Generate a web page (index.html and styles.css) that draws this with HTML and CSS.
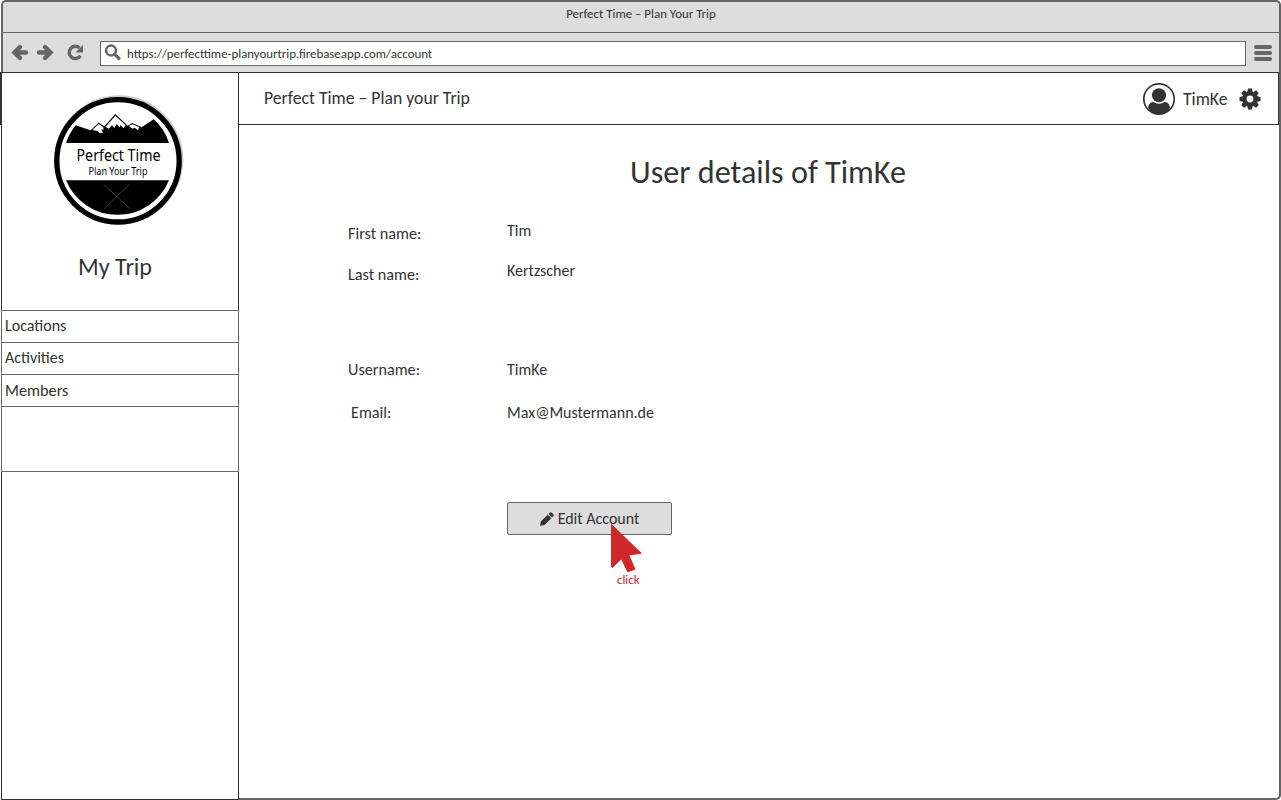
FILE: index.html
```html
<!DOCTYPE html>
<html lang="en">
<head>
<meta charset="utf-8">
<title>Perfect Time – Plan Your Trip</title>
<link rel="stylesheet" href="styles.css">
</head>
<body>
<div class="window">
  <div class="chrome">
    <div class="titlebar"><span class="window-title">Perfect Time – Plan Your Trip</span></div>
    <div class="toolbar">
      <svg class="nav" width="86" height="38" viewBox="3 33 86 38">
        <g fill="none" stroke="#666" stroke-width="4.400">
          <path d="M26 52.500H15M20 47L14.500 52.500L20 58" stroke-linecap="round"/>
          <path d="M39 52.500H50M45 47L50.500 52.500L45 58" stroke-linecap="round"/>
          <path d="M79.500 48A6.100 6.100 0 1 0 80.400 55.800" stroke-width="3.500"/>
        </g>
        <path d="M83 45V52.500H75.500Z" fill="#666"/>
      </svg>
      <div class="address">
        <svg class="search" width="18" height="18" viewBox="0 0 18 18"><circle cx="7" cy="6.500" r="4.900" fill="none" stroke="#666" stroke-width="2.500"/><path d="M10.600 10.200L15 14.500" stroke="#666" stroke-width="3.200" stroke-linecap="round"/></svg>
        <span class="url">https://perfecttime-planyourtrip.firebaseapp.com/account</span>
      </div>
      <div class="menu"><i></i><i></i><i></i></div>
    </div>
  </div>
  <div class="page">
    <aside class="sidebar">
      <div class="brand">
        <svg class="logo" width="140" height="140" viewBox="48 90 140 140">
          <circle cx="118.800" cy="159.800" r="64.500" fill="#ccc"/>
          <circle cx="118" cy="160.800" r="61.200" fill="#fff" stroke="#000" stroke-width="5.300"/>
          <g transform="translate(40 85) scale(.33333)">
            <path d="M78 174Q88 145 107 121L152 136L176 113L193 124L226 87L263 122L277 114L305 127L341 103Q374 132 387 174Z"/>
            <path d="M157 135L176 117L190 127L191 134L184 133L189 143L178 144L173 138ZM197 125L226 92L257 121L250 130L242 120L239 127L230 117L223 129L216 121L206 131ZM266 123L278 118L298 127L294 136L284 128L278 131Z" fill="#fff"/>
            <path d="M78 286H387A167 167 0 0 1 78 286Z"/>
            <path d="M190 297L271 372M269 297L192 372" stroke="#777" stroke-width="1.500"/>
          </g>
          <text class="logo-name" x="76.500" y="160.500" textLength="84" lengthAdjust="spacingAndGlyphs">Perfect Time</text>
          <text class="logo-tag" x="88.500" y="175.300" textLength="59" lengthAdjust="spacingAndGlyphs">Plan Your Trip</text>
        </svg>
        <span class="trip">My Trip</span>
      </div>
      <nav class="links">
        <a class="link locations">Locations</a>
        <a class="link activities">Activities</a>
        <a class="link members">Members</a>
        <div class="link-space"></div>
      </nav>
    </aside>
    <main class="main">
      <header class="header">
        <span class="app-name">Perfect Time – Plan your Trip</span>
        <div class="user">
          <svg width="34" height="34" viewBox="0 0 34 34"><circle cx="17" cy="17" r="15.200" fill="#fff" stroke="#333" stroke-width="1.700"/><circle cx="17" cy="13.300" r="7" fill="#333"/><path d="M6 26Q6.500 21 10.500 20Q12 19.700 13 20.700Q17 23 21 20.700Q22 19.700 23.500 20Q27.500 21 28 26Q24 32.500 17 32.500T6 26Z" fill="#333"/></svg>
          <span class="user-name">TimKe</span>
          <svg class="gear" width="22" height="22" viewBox="-11 -11 22 22"><g fill="#333"><circle r="7.800"/><path id="tooth" d="M-2.700 -7L-1.900 -10.500H1.900L2.700 -7V7L1.900 10.500H-1.900L-2.700 7Z"/><use href="#tooth" transform="rotate(45)"/><use href="#tooth" transform="rotate(90)"/><use href="#tooth" transform="rotate(135)"/></g><circle r="3.400" fill="#fff"/></svg>
        </div>
      </header>
      <section class="content">
        <h1 class="heading">User details of TimKe</h1>
        <dl class="details">
          <dt class="label first-l">First name:</dt><dd class="value first-v">Tim</dd>
          <dt class="label last-l">Last name:</dt><dd class="value last-v">Kertzscher</dd>
          <dt class="label username-l">Username:</dt><dd class="value username-v">TimKe</dd>
          <dt class="label email-l">Email:</dt><dd class="value email-v">Max@Mustermann.de</dd>
        </dl>
        <div class="action">
          <button class="edit">
            <svg width="14" height="14" viewBox="0 0 14 14" fill="#333"><path d="M0 13.800L.9 9.300L7.800 2.700L11.300 6.200L4.500 12.900ZM8.500 2L10 .5Q10.800 0 11.500 .5L13.500 2.500Q14.200 3.300 13.500 4L12 5.500Z"/></svg>
            <span class="edit-text">Edit Account</span>
          </button>
          <div class="click-note">
            <svg width="32" height="50" viewBox="0 0 32 50"><path d="M1.500 1.500L31.200 30.300L18.800 32L25 46.300L17.700 48.700L11.300 35.700L2.500 44.300L1.500 44Z" fill="#d02828" stroke="#d02828" stroke-linejoin="round"/></svg>
            <span class="click-text">click</span>
          </div>
        </div>
      </section>
    </main>
  </div>
</div>
</body>
</html>
```
FILE: styles.css
```css
* { box-sizing: border-box; }
body { margin: 0; background: #fff; color: #333; font-family: Carlito, Lato, sans-serif; font-size: 16px; }
svg { display: block; flex: none; }
span, a, dt, dd { white-space: nowrap; }
.window { width: 1280px; height: 800px; margin-left: 1px; display: flex; flex-direction: column; }
.chrome { height: 72px; flex: none; background: #ddd; border: 2px solid #666; border-bottom: 0; border-radius: 5px 5px 0 0; }
.titlebar { height: 31px; border-bottom: 1px solid #666; text-align: center; line-height: 23px; font-size: 12.900px; }
.toolbar { height: 39px; display: flex; align-items: flex-start; }
.address { width: 1146px; height: 25px; margin: 8px 8px 0 11px; border: 1px solid #666; background: #fff; display: flex; align-items: center; font-size: 12.850px; }
.search { margin: 0 5px 1px 3px; }
.menu { display: flex; flex-direction: column; gap: 2px; padding-top: 12px; }
.menu i { width: 18px; height: 4px; border-radius: 2px; background: #666; }
.page { flex: 1; display: flex; position: relative; }
/* outer edge of the header band, left of the sidebar */
.page::before { content: ""; position: absolute; left: -1px; top: 0; width: 1px; height: 53px; background: #333; }
.sidebar { width: 238px; border: 1px solid #333; }
.brand { height: 237px; display: flex; flex-direction: column; padding-top: 17px; }
.logo { margin-left: 46px; }
.logo-name { font: 17px "Noto Sans", sans-serif; }
.logo-tag { font: 11.500px "Noto Sans", sans-serif; }
.trip { font-size: 24.200px; line-height: 28px; margin: 23px 0 0 76px; }
.links { margin: 0 -1px; border: 1px solid #666; height: 162px; }
.link { display: block; height: 32px; border-bottom: 1px solid #666; padding-left: 3px; line-height: 30px; }
.members { font-size: 16.300px; }
.main { flex: 1; display: flex; flex-direction: column; border-right: 2px solid #666; border-bottom: 2px solid #666; border-radius: 0 0 5px 0; }
.header { height: 53px; flex: none; border: 1px solid #333; border-left: 0; display: flex; justify-content: space-between; padding-left: 25px; }
.app-name { font-size: 17.700px; line-height: 50px; }
.user { display: flex; align-items: center; padding-right: 17px; }
.user-name { width: 46px; margin: 0 10px 0 7px; font-size: 17.700px; line-height: 24px; }
.content { display: flex; flex-direction: column; }
.heading { font-size: 32.200px; font-weight: 400; line-height: 40px; margin: 27px 0 0 391px; white-space: nowrap; }
.details { margin: 29px 0 0 109px; display: grid; grid-template-columns: 159px 200px; grid-template-rows: 41px 95px 43px 40px; }
.label, .value { margin: 0; line-height: 20px; }
.first-l { padding-top: 3px; }
.last-l { padding-top: 3px; }
.username-l, .username-v { padding-top: 3px; }
.email-l, .email-v { padding-top: 3px; }
.email-l { padding-left: 3px; }
.last-v { margin-top: -1px; }
.label { font-size: 16.200px; }
.action { width: 165px; margin: 62px 0 0 268px; position: relative; }
.edit { width: 165px; height: 33px; padding: 0; display: flex; align-items: center; justify-content: center; gap: 4px; background: #ddd; border: 1px solid #666; border-radius: 2px; color: #333; font: inherit; }
.click-note { position: absolute; left: 103px; top: 21px; color: #d02828; font-size: 12.800px; line-height: 14px; }
.click-text { display: block; margin-left: 7px; }
```
